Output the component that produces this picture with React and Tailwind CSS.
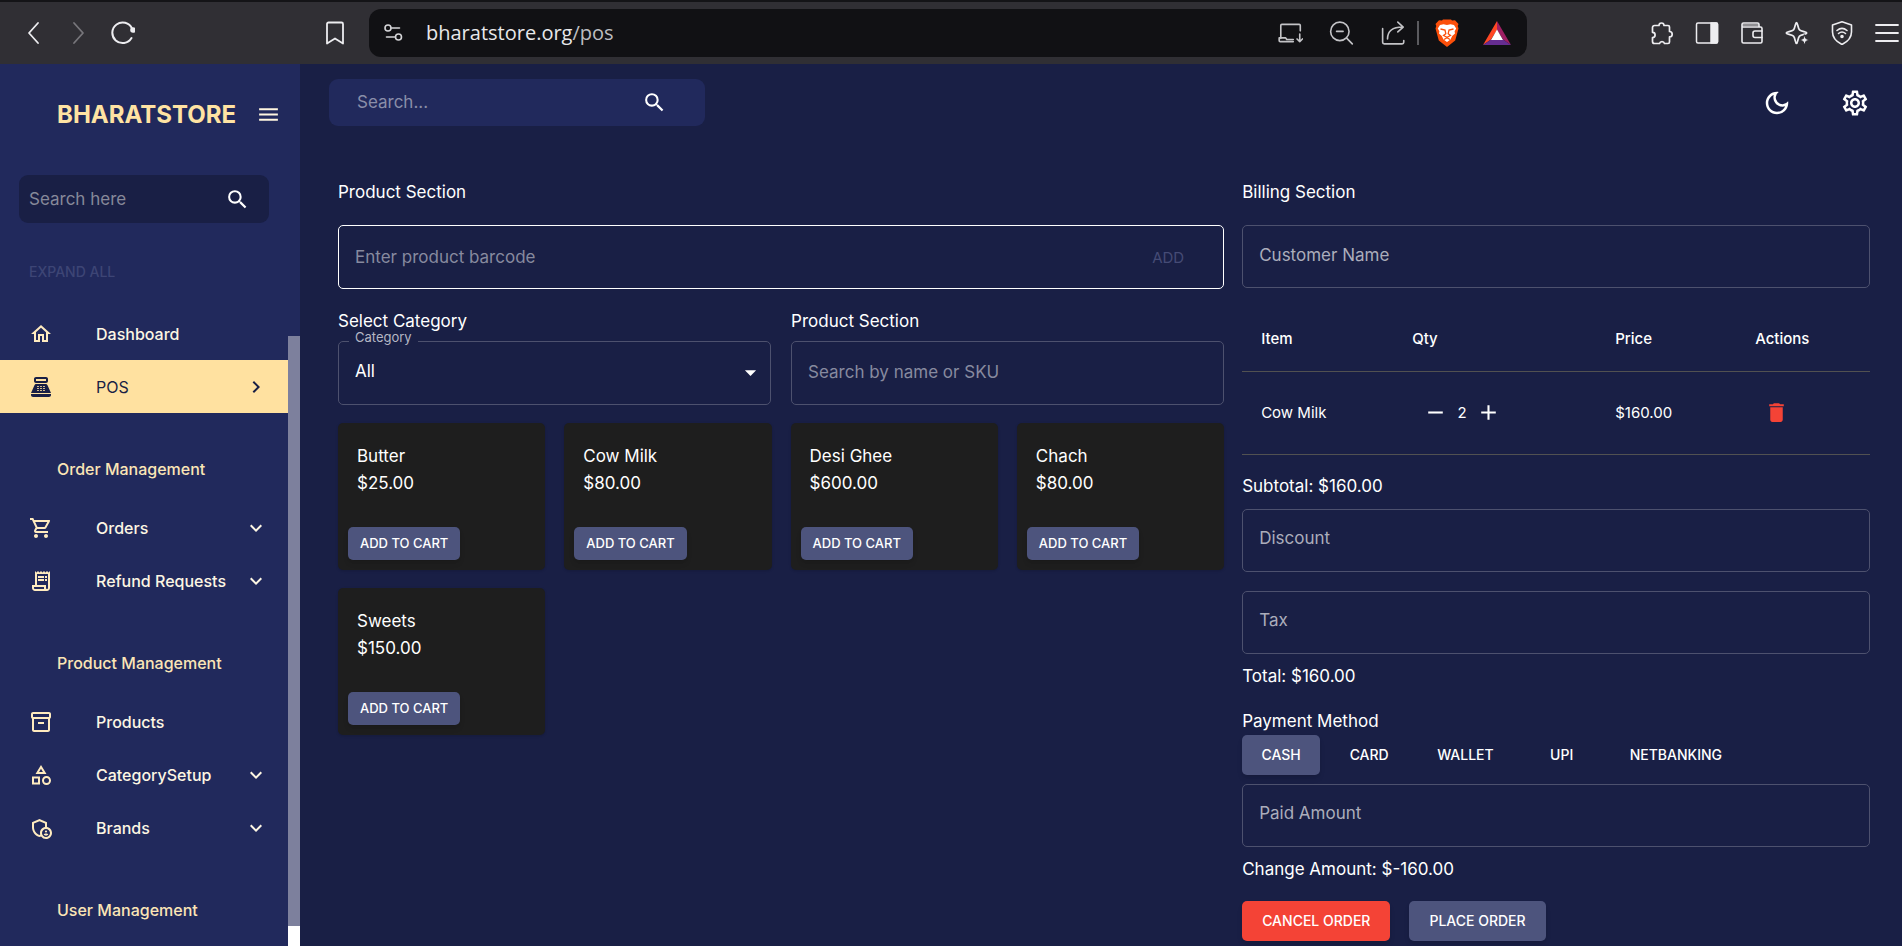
import React, { useState } from 'react';
import {
  MdMenu, MdSearch, MdOutlineHome, MdPointOfSale, MdChevronRight, MdExpandMore,
  MdOutlineShoppingCart, MdOutlineReceiptLong, MdOutlineInventory2, MdOutlineCategory,
  MdOutlineAdminPanelSettings, MdOutlineDarkMode, MdOutlineSettings, MdArrowDropDown,
  MdRemove, MdAdd, MdDelete,
} from 'react-icons/md';

const MENU = [
  {
    items: [
      { label: 'Dashboard', icon: MdOutlineHome },
      { label: 'POS', icon: MdPointOfSale, active: true },
    ],
  },
  {
    title: 'Order Management',
    items: [
      { label: 'Orders', icon: MdOutlineShoppingCart, expandable: true },
      { label: 'Refund Requests', icon: MdOutlineReceiptLong, expandable: true },
    ],
  },
  {
    title: 'Product Management',
    items: [
      { label: 'Products', icon: MdOutlineInventory2 },
      { label: 'CategorySetup', icon: MdOutlineCategory, expandable: true },
      { label: 'Brands', icon: MdOutlineAdminPanelSettings, expandable: true },
    ],
  },
  { title: 'User Management', items: [] },
];

const PRODUCTS = [
  { id: 1, name: 'Butter', price: 25 },
  { id: 2, name: 'Cow Milk', price: 80 },
  { id: 3, name: 'Desi Ghee', price: 600 },
  { id: 4, name: 'Chach', price: 80 },
  { id: 5, name: 'Sweets', price: 150 },
];

const METHODS = ['CASH', 'CARD', 'WALLET', 'UPI', 'NETBANKING'];

const money = (n) => `$${n.toFixed(2)}`;

function Stroke({ className = 'size-6', children, width = 1.5 }) {
  return (
    <svg viewBox="0 0 24 24" className={className} fill="none" stroke="currentColor" strokeWidth={width} strokeLinecap="round" strokeLinejoin="round" aria-hidden="true">
      {children}
    </svg>
  );
}

function BrowserBar() {
  return (
    <div className="flex h-16 items-center border-t-2 border-[#141417] bg-[#302f34] text-[#ededf0]">
      <div className="flex w-[369px] items-center pr-[22px] pl-[22px]">
        <button aria-label="Back"><Stroke width={1.8}><path d="M16 2 7 12l9 10" /></Stroke></button>
        <button aria-label="Forward" className="ml-5 text-[#77767b]"><Stroke width={1.8}><path d="m8 2 9 10-9 10" /></Stroke></button>
        <button aria-label="Reload" className="ml-[21px]">
          <Stroke width={2}>
            <path d="M20.5 17A10.300 10.300 0 1 1 21 7.500" />
            <circle cx="22" cy="9" r="1.800" fill="currentColor" />
          </Stroke>
        </button>
        <button aria-label="Bookmark" className="ml-auto"><Stroke width={1.8}><path d="M4 3a1.500 1.500 0 0 1 1.500-1.500h13A1.500 1.500 0 0 1 20 3v19.500l-8-5-8 5z" /></Stroke></button>
      </div>
      <div className="flex h-12 min-w-0 grow items-center rounded-xl bg-[#111114] pr-4 pl-3">
        <button aria-label="Site settings">
          <Stroke className="size-6 text-[#d5d5d8]" width={1.6}>
            <circle cx="7" cy="7" r="3" /><path d="M10.500 7h8M5.500 16h8" /><circle cx="17.500" cy="16" r="3" />
          </Stroke>
        </button>
        <span className="ml-[21px] font-['Open_Sans',sans-serif] text-xl text-[#e8e8ea]">bharatstore.org<span className="text-[#bdbdc1]">/pos</span></span>
        <div className="ml-auto flex items-center gap-[26px] text-[#c3c3c6]">
          <button aria-label="Install app">
            <Stroke className="size-[26px]" width={1.5}>
              <path d="M21.500 10V5a1 1 0 0 0-1-1h-16a1 1 0 0 0-1 1v12M15 20H3a1 1 0 0 1-1-1v-2.500h6l1 1.500h6" />
              <path d="M21 13v7m-2.500-2.500L21 20l2.500-2.500" />
            </Stroke>
          </button>
          <button aria-label="Zoom"><Stroke className="size-[26px]"><circle cx="10" cy="10.500" r="8.500" /><path d="M7 10.500h6M16.500 17l5 5" /></Stroke></button>
          <button aria-label="Share"><Stroke className="size-[26px]"><path d="M1.500 8v12.500a1.500 1.500 0 0 0 1.500 1.500h16.500a1.500 1.500 0 0 0 1.500-1.500V19M6 17.500C6 11 10 6.500 20 6.500M15.500 2 20.500 6.500l-5 4.500" /></Stroke></button>
        </div>
        <div className="ml-2.5 h-6 w-0.5 bg-[#5b5b5f]" />
        <button aria-label="Brave Shields" className="ml-4">
          <svg viewBox="0 0 24 28" className="h-7 w-6" aria-hidden="true">
            <path fill="#fb4f0a" d="M7 1.500 8 .5h8l1 1 3-.3L23.500 5l-.8 2 .8 2.500-3.300 12L12 28l-8.200-6.500L.5 9.500 1.300 7 .5 5 4 1.200z" />
            <path fill="#fff" d="M12 6 8.500 5.300 5 6 2.800 9.500l1.600 2.700L4 14.500l2.800 2.500L8.500 20.500l3.500 2.500 3.500-2.500L17.200 17l2.800-2.500-.4-2.300 1.600-2.700L19 6l-3.500-.7z" />
            <path fill="none" stroke="#fb4f0a" strokeWidth="1.300" d="m5.500 10 4.500 1 .8 3.700L8.500 16.500l3.500 1.800 3.500-1.800-2.300-1.800.8-3.700 4.500-1M9 20.500l3-1.800 3 1.800" />
          </svg>
        </button>
        <button aria-label="Brave Rewards" className="ml-6">
          <svg viewBox="0 0 28 24" className="h-6 w-7" aria-hidden="true">
            <path fill="#ff4724" d="M14 0v9L8 18.500 0 24z" />
            <path fill="#9e1f63" d="M14 0v9l6 9.500 8 5.500z" />
            <path fill="#662d91" d="M8 18.500h12l8 5.500H0z" />
            <path fill="#fff" d="m14 8.500 6 10.500H8z" />
          </svg>
        </button>
      </div>
      <div className="flex items-center justify-end gap-[21px] pl-[123px] pr-[3px]">
        <button aria-label="Extensions"><Stroke className="size-6" width={1.7}><path d="M9 4.500a2.500 2.500 0 0 1 5 0h4a1.500 1.500 0 0 1 1.500 1.500v4.500a2.700 2.700 0 0 1 0 5.400V21a1.500 1.500 0 0 1-1.500 1.500h-3.500a2.600 2.600 0 0 0-5 0H4.500a2 2 0 0 1-2-2v-4a2.600 2.600 0 0 0 0-5.200V6.500a2 2 0 0 1 2-2z" /></Stroke></button>
        <button aria-label="Side panel"><Stroke className="size-6" width={1.5}><rect x="1.500" y="2" width="21" height="20" rx="1.500" /><path fill="currentColor" d="M16 2h5.500a1 1 0 0 1 1 1v18a1 1 0 0 1-1 1H16z" /></Stroke></button>
        <button aria-label="Wallet">
          <Stroke className="size-6" width={1.6}>
            <path d="M19 6V3.500A1.500 1.500 0 0 0 17.500 2h-14A1.500 1.500 0 0 0 2 3.500v17A1.500 1.500 0 0 0 3.500 22h17a1.500 1.500 0 0 0 1.500-1.500v-13A1.500 1.500 0 0 0 20.500 6H3" />
            <path strokeOpacity=".5" strokeWidth="2" d="M3 4h15" /><path d="M22 10h-7a2 2 0 0 0-2 2v2.500a2 2 0 0 0 2 2h7" />
          </Stroke>
        </button>
        <button aria-label="Leo AI">
          <Stroke className="size-6" width={1.7}>
            <path d="M11.500 1.500c1.200 0 1.200 5.500 3 7.300s7.300 2 7.300 3.200-5.500 1.400-7.300 3.200-1.800 7.300-3 7.300-1.200-5.500-3-7.300-7.300-2-7.300-3.200 5.500-1.400 7.300-3.200 1.800-7.300 3-7.300z" />
            <path fill="currentColor" stroke="#302f34" strokeWidth="1" d="m19.500 14 1.400 3.600 3.600 1.400-3.600 1.400-1.400 3.600-1.400-3.600-3.600-1.400 3.600-1.400z" />
          </Stroke>
        </button>
        <button aria-label="VPN">
          <Stroke className="size-6" width={1.6}>
            <path d="M12 .8 21.500 4v7c0 6-4.500 10-9.500 12.500C7 21 2.500 17 2.500 11V4z" /><path d="M7 9.500c3-2.500 7-2.500 10 0M8.500 12.500c2-1.700 5-1.700 7 0" /><circle cx="12" cy="15.500" r="1" fill="currentColor" />
          </Stroke>
        </button>
        <button aria-label="Browser menu"><Stroke className="size-6" width={1.8}><path d="M1 4h22M1 12h22M1 20h22" /></Stroke></button>
      </div>
    </div>
  );
}

function MenuItem({ item }) {
  const Icon = item.icon;
  return (
    <a href="#" className={`flex h-[53px] items-center pr-5 pl-[29px] text-base ${item.active ? 'bg-[#ffe1a0] text-[#191f45]' : 'font-medium text-[#fdf6e3]'}`}>
      <Icon size={24} className={item.active ? 'text-[#191f45]' : 'text-[#ffebbf]'} />
      <span className="ml-[43px] grow">{item.label}</span>
      {item.active && <MdChevronRight size={24} />}
      {item.expandable && <MdExpandMore size={24} />}
    </a>
  );
}

function Sidebar() {
  return (
    <aside className="flex w-[300px] shrink-0 bg-[#21295c]">
      <div className="min-w-0 grow">
        <div className="flex h-[101px] items-center justify-between pr-[7px] pl-[57px]">
          <h1 className="text-2xl font-bold text-[#ffe3a3]">BHARATSTORE</h1>
          <button aria-label="Toggle menu" className="text-[#fff6e0]"><MdMenu size={25} /></button>
        </div>
        <div className="mt-2.5 mr-[19px] ml-[19px] flex h-12 items-center rounded-[9px] bg-[#191f45] pr-[19px] pl-2.5">
          <input aria-label="Search here" placeholder="Search here" className="min-w-0 grow bg-transparent outline-none placeholder:text-[#868899]" />
          <button aria-label="Search menu" className="text-white"><MdSearch size={25} /></button>
        </div>
        <div className="flex h-[84px] items-center pt-3.5 pl-[29px]">
          <button disabled className="text-sm font-medium text-[#3d4575]">EXPAND ALL</button>
        </div>
        <nav>
          {MENU.map((group, i) => (
            <div key={i}>
              {group.title && <h2 className="flex h-[88px] items-center pt-6 pl-[57px] text-base font-medium text-[#fbe5b6]">{group.title}</h2>}
              {group.items.map((item) => <MenuItem key={item.label} item={item} />)}
            </div>
          ))}
        </nav>
      </div>
      {/* scrollbar */}
      <div className="flex w-3 shrink-0 flex-col pt-[272px]">
        <div className="grow bg-[#7d809d]" />
        <div className="h-5 bg-white" />
      </div>
    </aside>
  );
}

function TopBar() {
  return (
    <header className="flex items-center justify-between pt-[15px] pr-8 pl-[29px]">
      <div className="flex h-[47px] w-[376px] items-center rounded-[9px] bg-[#21295c] pr-[38px] pl-7">
        <input aria-label="Search" placeholder="Search..." className="min-w-0 grow bg-transparent outline-none placeholder:text-[#8a8ea9]" />
        <button aria-label="Submit search" className="text-white"><MdSearch size={25} /></button>
      </div>
      <div className="flex items-center gap-12 text-white">
        <button aria-label="Dark mode"><MdOutlineDarkMode size={30} /></button>
        <button aria-label="Settings"><MdOutlineSettings size={30} /></button>
      </div>
    </header>
  );
}

function Field({ label, className = '' }) {
  return (
    <input aria-label={label} placeholder={label} className={`block h-[63px] w-full rounded-[5px] border border-[#4d516e] bg-transparent px-4 pb-1 outline-none placeholder:text-[#abadbb] ${className}`} />
  );
}

function ProductCard({ product, onAdd }) {
  return (
    <div className="rounded-[5px] bg-[#1e1e1e] px-2.5 pt-5 pb-2.5 shadow-sm">
      <h3 className="px-[9px]">{product.name}</h3>
      <p className="px-[9px]">{money(product.price)}</p>
      <button onClick={() => onAdd(product)} className="mt-[30px] h-[33px] rounded-[5px] bg-[#4d547d] px-3 text-[13px] font-medium shadow-md">ADD TO CART</button>
    </div>
  );
}

function ProductSection({ onAdd }) {
  return (
    <section className="col-span-7">
      <h2>Product Section</h2>
      <div className="mt-[19px] flex h-16 items-center rounded-[5px] border border-white pr-[39px] pl-4">
        <input aria-label="Enter product barcode" placeholder="Enter product barcode" className="min-w-0 grow bg-transparent outline-none placeholder:text-[#878a9f]" />
        <button disabled className="text-[15px] text-[#454b75]">ADD</button>
      </div>
      <div className="mt-[19px] grid grid-cols-2 gap-5">
        <div>
          <h2>Select Category</h2>
          <div className="relative mt-1.5 h-16">
            <label htmlFor="category" className="absolute -top-3.5 left-[11px] bg-[#191f45] px-1.5 text-[13px] leading-5 text-[#b5b7c4]">Category</label>
            <select id="category" className="h-full w-full appearance-none rounded-[5px] border border-[#4d516e] bg-transparent px-4 pb-1 text-white outline-none">
              <option>All</option>
            </select>
            <MdArrowDropDown size={27} className="pointer-events-none absolute top-[18px] right-[7px] text-white" />
          </div>
        </div>
        <div>
          <h2>Product Section</h2>
          <input aria-label="Search by name or SKU" placeholder="Search by name or SKU" className="mt-1.5 block h-16 w-full rounded-[5px] border border-[#4d516e] bg-transparent px-4 pb-0.5 outline-none placeholder:text-[#878a9f]" />
        </div>
      </div>
      <div className="mt-[18px] grid grid-cols-4 gap-x-[19px] gap-y-[18px]">
        {PRODUCTS.map((p) => <ProductCard key={p.id} product={p} onAdd={onAdd} />)}
      </div>
    </section>
  );
}

function BillingSection({ cart, changeQty, remove }) {
  const [method, setMethod] = useState('CASH');
  const total = cart.reduce((sum, c) => sum + c.price * c.qty, 0);

  return (
    <section className="col-span-5">
      <h2>Billing Section</h2>
      <Field label="Customer Name" className="mt-[19px]" />

      <table className="mt-[18px] w-full table-fixed text-left text-[15px]">
        <thead>
          <tr className="h-[65px] border-b border-[#515151]">
            <th className="w-[151px] pl-[19px] font-medium">Item</th>
            <th className="w-[203px] pl-[19px] font-medium">Qty</th>
            <th className="w-[140px] pl-[19px] font-medium">Price</th>
            <th className="pl-[19px] font-medium">Actions</th>
          </tr>
        </thead>
        <tbody>
          {cart.map((c) => (
            <tr key={c.id} className="h-[83px] border-b border-[#515151]">
              <td className="pl-[19px]">{c.name}</td>
              <td className="pl-[30px]">
                <div className="flex items-center">
                  <button aria-label="Decrease quantity" onClick={() => changeQty(c.id, -1)}><MdRemove size={25} /></button>
                  <span className="w-7 text-center">{c.qty}</span>
                  <button aria-label="Increase quantity" onClick={() => changeQty(c.id, 1)}><MdAdd size={25} /></button>
                </div>
              </td>
              <td className="pl-[19px]">{money(c.price * c.qty)}</td>
              <td className="pl-[28px]">
                <button aria-label="Remove item" onClick={() => remove(c.id)} className="block text-[#f44336]"><MdDelete size={25} /></button>
              </td>
            </tr>
          ))}
        </tbody>
      </table>

      <p className="mt-[18px]">Subtotal: {money(total)}</p>
      <Field label="Discount" className="mt-[9px]" />
      <Field label="Tax" className="mt-[19px]" />
      <p className="mt-[9px]">Total: {money(total)}</p>

      <p className="mt-[18px]">Payment Method</p>
      <div className="flex gap-2.5">
        {METHODS.map((m) => (
          <button key={m} onClick={() => setMethod(m)} className={`h-10 min-w-[78px] rounded-[5px] px-[19px] text-sm font-medium ${m === method ? 'bg-[#4d547d] shadow-md' : ''}`}>{m}</button>
        ))}
      </div>
      <Field label="Paid Amount" className="mt-[9px]" />
      <p className="mt-[9px]">Change Amount: ${(0 - total).toFixed(2)}</p>

      <div className="mt-[18px] flex gap-[19px] text-sm font-medium">
        <button className="h-10 rounded-[5px] bg-[#f44336] px-5 shadow-md">CANCEL ORDER</button>
        <button className="h-10 rounded-[5px] bg-[#4d547d] px-5 shadow-md">PLACE ORDER</button>
      </div>
    </section>
  );
}

function App() {
  const [cart, setCart] = useState([{ id: 2, name: 'Cow Milk', price: 80, qty: 2 }]);

  const changeQty = (id, by) => setCart((prev) => prev.map((c) => c.id === id ? { ...c, qty: Math.max(1, c.qty + by) } : c));
  const remove = (id) => setCart((prev) => prev.filter((c) => c.id !== id));
  const onAdd = (p) => {
    if (cart.some((c) => c.id === p.id)) return changeQty(p.id, 1);
    setCart((prev) => [...prev, { ...p, qty: 1 }]);
  };

  return (
    <div className="flex min-h-screen flex-col bg-[#191f45] font-['Inter',sans-serif] text-[17px] leading-[27px] text-white">
      <BrowserBar />
      <div className="flex grow">
        <Sidebar />
        <main className="min-w-0 grow">
          <TopBar />
          <div className="grid grid-cols-12 items-start gap-[18px] pt-[53px] pr-8 pl-[38px]">
            <ProductSection onAdd={onAdd} />
            <BillingSection cart={cart} changeQty={changeQty} remove={remove} />
          </div>
        </main>
      </div>
    </div>
  );
}

export default App;
